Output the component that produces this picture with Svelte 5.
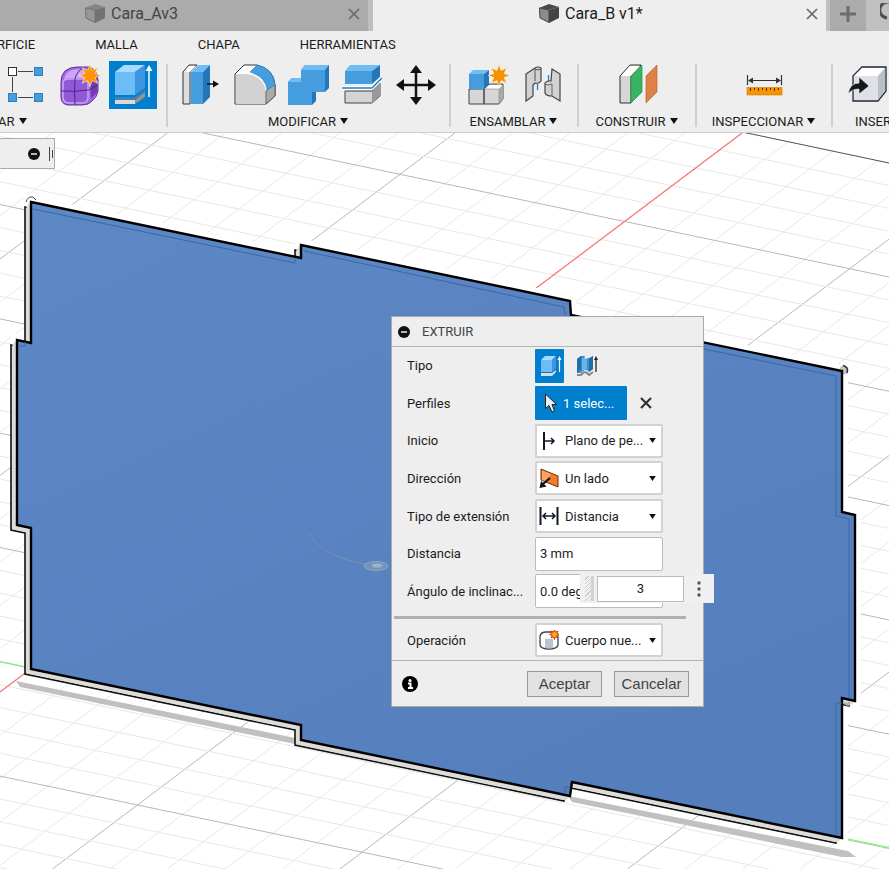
<script lang="ts">
  // document tabs
  let tabs = [
    { id: 0, name: 'Cara_Av3', active: false },
    { id: 1, name: 'Cara_B v1*', active: true }
  ];

  let menus = ['RFICIE', 'MALLA', 'CHAPA', 'HERRAMIENTAS'];

  let groups = [
    { label: 'AR', icons: ['sketch', 'form', 'extrude'], arrow: true },
    { label: 'MODIFICAR', icons: ['press', 'fillet', 'combine', 'split', 'move'], arrow: true },
    { label: 'ENSAMBLAR', icons: ['component', 'joint'], arrow: true },
    { label: 'CONSTRUIR', icons: ['plane'], arrow: true },
    { label: 'INSPECCIONAR', icons: ['measure'], arrow: true },
    { label: 'INSER', icons: ['insert'], arrow: false }
  ];

  let type = 'solid';
  let distance = '3 mm';
  let angle = '0.0 deg';
  let floating = '3';

  // grid lines: one family falls to the right, the other rises
  const SLOPE_A = 0.21;
  const SLOPE_B = 0.753;
  let gridA: { y: number; major: boolean }[] = [];
  for (let i = -4; i <= 43; i++) {
    gridA.push({ y: -24 + i * 22.86, major: i % 5 === 0 });
  }
  let gridB: { x: number; major: boolean }[] = [];
  for (let i = -5; i <= 32; i++) {
    gridB.push({ x: 344 + i * 57.5, major: i % 5 === 0 });
  }

  const plate =
    '31,202 301,258 301,245 570,301 571,315 842,371 842,512 855,515 855,701 842,698 842,838 572,782 570,796 301,740 301,725 31,669 31,528 17,525 17,340 31,343';

  function star(cx: number, cy: number, outer: number, inner: number, n: number) {
    let pts: string[] = [];
    for (let i = 0; i < n * 2; i++) {
      const r = i % 2 === 0 ? outer : inner;
      const a = (Math.PI * i) / n - Math.PI / 2;
      pts.push(`${(cx + r * Math.cos(a)).toFixed(1)},${(cy + r * Math.sin(a)).toFixed(1)}`);
    }
    return pts.join(' ');
  }
</script>

{#snippet caret()}
  <svg class="caret" viewBox="0 0 8 6" aria-hidden="true"><path d="M0 0H8L4 6Z" /></svg>
{/snippet}

{#snippet minus()}
  <svg class="minus" viewBox="0 0 12 12" aria-hidden="true">
    <circle cx="6" cy="6" r="6" fill="#111" />
    <path d="M3 6H9" stroke="#fff" stroke-width="1.4" />
  </svg>
{/snippet}

{#snippet tool(name)}
  <svg viewBox="0 0 48 48" aria-hidden="true">
    {#if name === 'sketch'}
      <path d="M17 10.5H32M11.5 16V31M17 36.5H32" stroke="#444" fill="none" />
      <rect x="7.5" y="6.5" width="8" height="8" fill="#fff" stroke="#333" />
      <g fill="#459ddd" stroke="#2f7fbd">
        <rect x="33.5" y="6.5" width="8" height="8" />
        <rect x="7.5" y="32.5" width="8" height="8" />
        <rect x="33.5" y="32.5" width="8" height="8" />
      </g>
    {:else if name === 'form'}
      <path d="M6 21Q6 14 10 10Q15 6 22 6H34Q42 8 43 19V30Q42 36 37 40Q34 44 27 44H13Q6 43 6 36Z" fill="#a46be0" stroke="#5b2e9c" />
      <path d="M9 20Q9 12 17 9Q26 7 35 11Q39 16 33 17H14Q10 17 9 20Z" fill="#caa5f5" />
      <path d="M8 21Q9 18 14 18H28Q33 18 33 23V36Q33 42 27 42H14Q8 42 8 36Z" fill="#9059d6" stroke="#c9a4f5" stroke-width="1.5" />
      <path d="M35 21L42 17V31L36 38Z" fill="#7339b5" />
      <path d="M6 30Q20 31 34 29L43 24M20 44Q19 28 20 18Q22 10 28 7" fill="none" stroke="#4e258a" />
      <polygon points={star(35, 14.5, 11, 5.5, 8)} fill="#ff9400" stroke="#fff3df" stroke-width="0.6" />
    {:else if name === 'extrude'}
      <path d="M6 11L15 4H36L26 11Z" fill="#a8dbff" />
      <path d="M6 11H26V34H6Z" fill="#6cbcf8" />
      <path d="M26 11L36 4V27L26 34Z" fill="#3b96df" />
      <path d="M6 36H26L36 29V31L26 39H6Z" fill="#3b82b8" />
      <path d="M6 39H26V43H6Z" fill="#ddd8d2" />
      <path d="M26 39L36 31V36L26 43Z" fill="#99948d" />
      <path d="M40 9V36" stroke="#fff" stroke-width="1.5" />
      <path d="M36.5 10L40 4L43.5 10Z" fill="#fff" />
    {:else if name === 'press'}
      <path d="M7 11L13 4H21L14 11V43H7Z" fill="#ddd" stroke="#333" />
      <path d="M8 11L13 5H20L14 11Z" fill="#fff" />
      <path d="M15 11L22 4H34L27 11Z" fill="#70bcf4" />
      <path d="M15 11H27V43H15Z" fill="#459ddd" />
      <path d="M27 11L34 4V36L27 43Z" fill="#2377b8" />
      <path d="M31 23H38" stroke="#111" stroke-width="1.5" />
      <path d="M37 19.5L43 23L37 26.5Z" fill="#111" />
    {:else if name === 'fillet'}
      <path d="M5 13L14 4H27Q44 8 45 24V35L36 43H5Z" fill="#fff" stroke="#333" />
      <path d="M6 13H17Q34 15 36 31V43H6Z" fill="#d2d2d2" />
      <path d="M36 30L45 23V35L36 43Z" fill="#aaa" stroke="#444" stroke-width="0.7" />
      <path d="M20 11L27 4Q43 7 45 24L37 29Q36 16 20 11Z" fill="#459ddd" stroke="#2d7dba" stroke-width="0.6" />
    {:else if name === 'combine'}
      <path d="M4 21L8 17H17V9L21 4H45V27L41 31H32V40L28 44H4Z" fill="#2377b8" />
      <path d="M4 21H17V9H41V31H28V44H4Z" fill="#459ddd" />
      <path d="M17 9L21 4H45L41 9ZM4 21L8 17H17V21Z" fill="#70bcf4" />
    {:else if name === 'split'}
      <path d="M7 10L12 4H42L34 10Z" fill="#70bcf4" />
      <path d="M7 10H34V23H7Z" fill="#459ddd" />
      <path d="M34 10L42 4V16L34 23Z" fill="#2377b8" />
      <path d="M7 30H34L42 22V35L34 42H7Z" fill="#d4d4d4" stroke="#444" />
      <path d="M34 30L42 22V35L34 42Z" fill="#999" />
      <path d="M4 27H34L44 17" fill="none" stroke="#fff" stroke-width="4" />
      <path d="M4 27H34L44 17" fill="none" stroke="#247fc5" stroke-width="1.5" />
    {:else if name === 'move'}
      <path d="M24 8V40M8 24H40" stroke="#111" stroke-width="2.5" />
      <path d="M24 4L30 12H18ZM24 44L30 36H18ZM4 24L12 18V30ZM44 24L36 18V30Z" fill="#111" />
    {:else if name === 'component'}
      <path d="M6 28H21V43H6ZM21 28L26 23H40V38L36 43H21Z" fill="#d6d6d6" stroke="#444" />
      <path d="M22 28L26 24H39L36 28Z" fill="#fff" />
      <path d="M36 28L40 24V38L36 43Z" fill="#aaa" />
      <path d="M21.5 28H36V43" fill="none" stroke="#888" stroke-width="0.6" />
      <path d="M6 13L10 9H26L21 13Z" fill="#70bcf4" />
      <path d="M6 13H21V28H6Z" fill="#459ddd" />
      <path d="M21 13L26 9V24L21 28Z" fill="#2377b8" />
      <polygon points={star(36, 14.5, 11, 5.5, 8)} fill="#f59200" stroke="#fff3df" stroke-width="0.6" />
    {:else if name === 'joint'}
      <path d="M9 13L18 7Q21 5 24 7V20Q22 23 18 22L16 24V35L9 40Z" fill="#d2d2d2" stroke="#444" stroke-width="1.2" />
      <path d="M18 8V20M18 8Q21 10 24 8" fill="none" stroke="#555" />
      <path d="M35 8L43 13V40L35 35Q29 35 28 32V22Q30 19 34 20Z" fill="#d2d2d2" stroke="#444" stroke-width="1.2" />
      <path d="M28 23Q31 25 35 23V35" fill="none" stroke="#666" />
      <path d="M20.5 22V29M31.5 14V21" stroke="#1684d8" stroke-width="1.3" />
    {:else if name === 'plane'}
      <path d="M7 15L17 4H28L18 15V42H7Z" fill="#d6d6d6" stroke="#333" />
      <path d="M8 15L17 5H27L18 15Z" fill="#fff" />
      <path d="M18 15L29 4V31L18 42Z" fill="#38b35f" stroke="#249248" stroke-width="0.7" />
      <path d="M33 15L44 4V31L33 42Z" fill="#df8147" stroke="#bb642e" stroke-width="0.7" />
    {:else if name === 'measure'}
      <path d="M7.5 14V24M41.5 14V24M10 19.5H39" stroke="#333" stroke-width="1.2" />
      <path d="M8 19.5L13 16.5V22.5ZM41 19.5L36 16.5V22.5Z" fill="#333" />
      <rect x="7" y="26.5" width="35" height="7.5" fill="#f79400" stroke="#d87900" stroke-width="0.6" />
      <path d="M10.5 27V30M14.5 27V29M18.5 27V30M22.5 27V29M26.5 27V30M30.5 27V29M34.5 27V30M38.5 27V29" stroke="#333" />
    {:else if name === 'insert'}
      <path d="M10 15L19 6H43V30L35 40H10Z" fill="#dfe1e6" stroke="#222b33" stroke-width="1.3" />
      <path d="M11 15L19 7H42L35 15Z" fill="#fff" />
      <path d="M35 15L42 7V30L35 39Z" fill="#b9bec8" />
      <path d="M5 33Q7 22 16 22V16L26 25L16 33V28Q9 28 5 33Z" fill="#16191c" stroke="#eee" stroke-width="0.6" />
    {/if}
  </svg>
{/snippet}

<div class="app">
  <header>
    <div class="tabs">
      {#each tabs as tab (tab.id)}
        <div class="tab" class:active={tab.active}>
          <button class="tab-name">
            <svg viewBox="0 0 20 20" aria-hidden="true">
              <path d="M0 4L10 0L20 3L10 6Z" fill={tab.active ? '#4a4a4a' : '#858585'} />
              <path d="M10 6L20 3V14L10 19Z" fill={tab.active ? '#444' : '#727272'} />
              <path d="M0.5 4L10 6V18.5L1 14Z" fill={tab.active ? '#8c8c8c' : '#979797'} stroke={tab.active ? '#444' : '#727272'} />
            </svg>
            {tab.name}
          </button>
          <button class="close" aria-label="Cerrar">
            <svg viewBox="0 0 12 12" aria-hidden="true"><path d="M1 1L11 11M11 1L1 11" stroke="#6a6a6a" stroke-width="1.7" /></svg>
          </button>
        </div>
      {/each}
      <button class="new-tab" aria-label="Nuevo">
        <svg viewBox="0 0 18 18" aria-hidden="true"><path d="M9 1V17M1 9H17" stroke="#6c6c6c" stroke-width="3" /></svg>
      </button>
      <button class="more" aria-label="Actualizar">
        <svg viewBox="0 0 18 18" aria-hidden="true"><path d="M14 2A8 8 0 1 0 7 15" fill="none" stroke="#505050" stroke-width="3" /></svg>
      </button>
    </div>

    <nav>
      {#each menus as menu}
        <button>{menu}</button>
      {/each}
    </nav>

    <div class="toolbar">
      {#each groups as group}
        <div class="group">
          <div class="icons">
            {#each group.icons as icon}
              <button class="tool" class:selected={icon === 'extrude'} aria-label={icon}>{@render tool(icon)}</button>
            {/each}
          </div>
          <button class="group-label">
            {group.label}
            {#if group.arrow}{@render caret()}{/if}
          </button>
        </div>
      {/each}
    </div>
  </header>

  <main>
    <svg class="canvas" viewBox="0 133 889 736" preserveAspectRatio="xMinYMin slice" aria-hidden="true">
      <defs>
        <clipPath id="ground"><path d="M0 -24L889 163V869H0Z" /></clipPath>
        <linearGradient id="face" x1="0" y1="0" x2="0.6" y2="1">
          <stop offset="0" stop-color="#5d88c6" />
          <stop offset="1" stop-color="#557ebd" />
        </linearGradient>
      </defs>
      <rect y="133" width="889" height="736" fill="#fff" />
      <g clip-path="url(#ground)">
        {#each gridB as line}
          <line class="grid" class:major={line.major} x1={line.x} y1="0" x2={line.x - 869 / SLOPE_B} y2="869" />
        {/each}
        {#each gridA as line}
          <line class="grid" class:major={line.major} x1="0" y1={line.y} x2="889" y2={line.y + 889 * SLOPE_A} />
        {/each}
      </g>
      <path d="M740 131.5L889 163" stroke="#555" fill="none" />
      <path d="M0 692L742 133" stroke="#f77" fill="none" stroke-width="1.2" />
      <path d="M0 661.5L889 847.5" stroke="#6f6" fill="none" stroke-width="1.2" />

      <!-- plate with its side faces and the shadow on the ground -->
      <polygon points={plate} fill="#fff" stroke="#fff" stroke-width="12" />
      <path d="M16 681L295 738V744L20 687ZM568 796L848 851L856 857L842 857L572 802Z" fill="#c0c0c0" />
      <polygon points={plate} fill="#dcdcd9" stroke="#111" stroke-width="1.6" transform="translate(-6 5)" />
      {#each [4, 3, 2, 1] as step}
        <polygon points={plate} fill="#dcdcd9" stroke="#dcdcd9" transform="translate({-step} {step})" />
      {/each}
      <path d="M26 202Q28 196 33 197L36 200" fill="none" stroke="#444" />
      <circle cx="844" cy="370" r="4.5" fill="#c4c4c4" />
      <path d="M843 365.5Q849 367 847 373" fill="none" stroke="#333" stroke-width="1.5" />
      <path d="M844 703L848 705L849 702" fill="none" stroke="#aaa" stroke-width="2" />
      <polygon points={plate} fill="url(#face)" stroke="#000" stroke-width="2.4" />
      <g fill="none" stroke="#3c66a4" stroke-width="1">
        <path d="M33 209L295 263V259M304 251L564 307L565 315M704 349L836 376V516L849 519V698" />
        <path d="M842 703H836V834M570 787H565V794M19 346H25V342" />
      </g>
      <path d="M309 533Q323 557 365 564" fill="none" stroke="#7891ac" />
      <ellipse cx="376" cy="566" rx="12" ry="4.5" fill="#7394bd" stroke="#8ca5c0" />
      <ellipse cx="377" cy="565.5" rx="5" ry="2" fill="#9fb3ca" />
    </svg>

    <div class="browser">
      <button aria-label="Contraer">{@render minus()}</button>
      <svg class="handle" viewBox="0 0 4 14" aria-hidden="true"><path d="M0.5 0V14M3.5 3V11" stroke="#444" /></svg>
    </div>

    <form class="dialog">
      <div class="title">
        {@render minus()}
        <h2>EXTRUIR</h2>
      </div>

      <div class="rows">
        <div class="row">
          <span class="label">Tipo</span>
          <button type="button" class="type" class:on={type === 'solid'} aria-label="Extruir" on:click={() => (type = 'solid')}>
            <svg viewBox="0 0 24 24" aria-hidden="true">
              <path d="M3 6L7 2H18L14 6Z" fill="#a8dbff" />
              <path d="M3 6H14V18H3Z" fill="#6cbcf8" />
              <path d="M14 6L18 2V14L14 18Z" fill="#3b96df" />
              <path d="M3 19H14L18 16V18L14 22H3Z" fill="#ddd" />
              <path d="M21.5 5V18" stroke="#fff" stroke-width="1.2" />
              <path d="M19.5 6L21.5 2L23.5 6Z" fill="#fff" />
            </svg>
          </button>
          <button type="button" class="type" class:on={type === 'thin'} aria-label="Extrusión fina" on:click={() => (type = 'thin')}>
            <svg viewBox="0 0 24 24" aria-hidden="true">
              <path d="M2 5L6 2H10L9 5L14 4L18 2V15L14 18Q11 14 8 17L6 19H2Z" fill="#3a8fd3" />
              <path d="M2 5L6 2V15L2 19ZM14 5L18 2V15L14 18Z" fill="#246ca6" />
              <path d="M7 4L12 5V15L7 16Z" fill="#67b4ed" />
              <path d="M2 21H6L9 18Q12 18 14 21L18 18" fill="none" stroke="#888" stroke-width="2" />
              <path d="M21 5V18" stroke="#222" stroke-width="1.3" />
              <path d="M19 6L21 2L23 6Z" fill="#222" />
            </svg>
          </button>
        </div>

        <div class="row">
          <span class="label">Perfiles</span>
          <button type="button" class="selection">
            <svg viewBox="0 0 14 20" aria-hidden="true"><path d="M1.5 1V15.5L5 12.5L8 19L10.5 18L8 11.5H12.5Z" fill="#eee" stroke="#222" /></svg>
            1 selec...
          </button>
          <button type="button" class="clear" aria-label="Borrar">
            <svg viewBox="0 0 12 12" aria-hidden="true"><path d="M1 1L11 11M11 1L1 11" stroke="#333" stroke-width="2.2" /></svg>
          </button>
        </div>

        <div class="row">
          <label class="label" for="start">Inicio</label>
          <div class="select">
            <svg viewBox="0 0 20 20" aria-hidden="true">
              <path d="M5 1V19" stroke="#111827" stroke-width="2" />
              <path d="M6 10H14M12 7L15 10L12 13" fill="none" stroke="#111827" stroke-width="1.5" />
            </svg>
            <select id="start"><option>Plano de pe...</option></select>
            {@render caret()}
          </div>
        </div>

        <div class="row">
          <label class="label" for="direction">Dirección</label>
          <div class="select">
            <svg viewBox="0 0 20 20" aria-hidden="true">
              <path d="M2 1L19 8V19L2 12Z" fill="#f27a2b" stroke="#6f2f0c" />
              <path d="M3 2.5L12 6L6 13L3 12Z" fill="#f9a56a" />
              <path d="M11 10L4 16" stroke="#111" stroke-width="2" />
              <path d="M0.5 20L2 13L7.5 18.5Z" fill="#111" />
            </svg>
            <select id="direction"><option>Un lado</option></select>
            {@render caret()}
          </div>
        </div>

        <div class="row">
          <label class="label" for="extent">Tipo de extensión</label>
          <div class="select">
            <svg viewBox="0 0 20 20" aria-hidden="true">
              <path d="M1.5 1V19M18.5 1V19" stroke="#111827" stroke-width="2" />
              <path d="M4 10H16M7 7L4 10L7 13M13 7L16 10L13 13" fill="none" stroke="#111827" stroke-width="1.5" />
            </svg>
            <select id="extent"><option>Distancia</option></select>
            {@render caret()}
          </div>
        </div>

        <div class="row">
          <label class="label" for="distance">Distancia</label>
          <input id="distance" bind:value={distance} />
        </div>

        <div class="row">
          <label class="label" for="angle">Ángulo de inclinac...</label>
          <input id="angle" bind:value={angle} />
        </div>
      </div>

      <div class="operation">
        <div class="row">
          <label class="label" for="operation">Operación</label>
          <div class="select">
            <svg viewBox="0 0 20 20" aria-hidden="true">
              <path d="M1 6Q2 2 7 2H13Q19 3 19 7V15Q18 19 10 19Q2 19 1 15Z" fill="#fff" stroke="#3b4250" stroke-width="1.3" />
              <path d="M6 9H14V18Q10 19 6 18Z" fill="#bcc3cf" />
              <polygon points={star(15.5, 4.5, 5, 2.5, 8)} fill="#ffae28" stroke="#cf3f0b" />
            </svg>
            <select id="operation"><option>Cuerpo nue...</option></select>
            {@render caret()}
          </div>
        </div>
      </div>

      <div class="footer">
        <svg class="info" viewBox="0 0 16 16" aria-hidden="true">
          <circle cx="8" cy="8" r="8" fill="#000" />
          <circle cx="8" cy="4.5" r="1.5" fill="#fff" />
          <path d="M6 7.5H8.5V12M6 12H11" fill="none" stroke="#fff" stroke-width="2" />
        </svg>
        <button type="button">Aceptar</button>
        <button type="button">Cancelar</button>
      </div>
    </form>

    <!-- floating value input over the dialog -->
    <div class="floating">
      <span class="grip"></span>
      <input aria-label="Distancia" bind:value={floating} />
      <button aria-label="Opciones">
        <svg viewBox="0 0 4 18" aria-hidden="true"><circle cx="2" cy="3" r="1.7" /><circle cx="2" cy="9" r="1.7" /><circle cx="2" cy="15" r="1.7" /></svg>
      </button>
    </div>
  </main>
</div>

<style>
  :global(body) {
    margin: 0;
  }

  .app {
    display: flex;
    flex-direction: column;
    min-height: 100vh;
    overflow: hidden;
    font-family: Roboto, 'Liberation Sans', sans-serif;
    font-size: 13px;
    color: #1c1c1c;
  }

  button,
  input,
  select {
    font: inherit;
    color: inherit;
    box-sizing: border-box;
    margin: 0;
  }

  button {
    padding: 0;
    border: none;
    background: none;
    cursor: pointer;
  }

  svg {
    display: block;
    flex-shrink: 0;
  }

  header {
    height: 133px;
    box-sizing: border-box;
    background: #eee;
    border-bottom: 1px solid #ccc;
    overflow: hidden;
  }

  /* document tabs */
  .tabs {
    display: grid;
    grid-template-columns: 373fr 453fr 40px 23px;
    height: 31px;
    background: #c0c0c0;
  }

  .tab {
    display: flex;
    align-items: center;
    justify-content: space-between;
    padding: 0 8px 4px 85px;
    background: #ababab;
    border-right: 5px solid #bebebe;
    color: #444;
  }

  .tab.active {
    padding-left: 166px;
    background: #eee;
    border-right: none;
    color: #1c1c1c;
  }

  .tab-name {
    display: flex;
    align-items: center;
    gap: 6px;
    font-size: 16px;
  }

  .tab-name svg {
    width: 20px;
    height: 20px;
  }

  .close svg {
    width: 12px;
    height: 12px;
  }

  .new-tab {
    display: flex;
    align-items: center;
    justify-content: center;
    padding-bottom: 4px;
    background: #ababab;
    border-left: 4px solid #c0c0c0;
  }

  .new-tab svg,
  .more svg {
    width: 18px;
    height: 18px;
  }

  .more {
    padding: 0 0 8px 14px;
    overflow: hidden;
  }

  nav {
    display: flex;
    align-items: center;
    gap: 60px;
    height: 28px;
    padding-bottom: 2px;
    box-sizing: border-box;
    margin-left: -3px;
  }

  .toolbar {
    display: grid;
    grid-template-columns: 168px 283px 128px 118px 136px 1fr;
  }

  .group {
    display: flex;
    flex-direction: column;
    align-items: center;
    min-width: 0;
    height: 72px;
    padding-right: 3px;
    position: relative;
  }

  .group:not(:last-child)::after {
    content: '';
    position: absolute;
    right: 0;
    top: 5px;
    width: 2px;
    height: 63px;
    background: #cfcfcf;
  }

  .icons {
    display: flex;
    gap: 6px;
    padding: 2px 0;
  }

  .tool {
    width: 48px;
    height: 48px;
  }

  .tool.selected {
    background: #007fcf;
  }

  .tool svg {
    width: 48px;
    height: 48px;
  }

  .group-label {
    display: flex;
    align-items: center;
    gap: 4px;
    height: 16px;
    margin-top: 2px;
    white-space: nowrap;
  }

  .group:first-child,
  .group:last-child {
    align-items: flex-start;
  }

  .group:first-child .icons {
    padding-left: 1px;
  }

  .group:first-child .group-label {
    margin-left: -2px;
  }

  .group:last-child {
    padding-left: 10px;
  }

  .group:last-child .group-label {
    padding-left: 12px;
  }

  .caret {
    width: 8px;
    height: 6px;
    fill: #111;
  }

  .minus {
    width: 12px;
    height: 12px;
  }

  /* viewport */
  main {
    position: relative;
    flex: 1;
    min-height: 600px;
  }

  .canvas {
    position: absolute;
    inset: 0;
    width: 100%;
    height: 100%;
  }

  .grid {
    stroke: #e8e8e8;
    stroke-width: 1;
  }

  .grid.major {
    stroke: #b8b8b8;
  }

  .browser {
    position: absolute;
    left: 0;
    top: 5px;
    display: flex;
    align-items: center;
    justify-content: flex-end;
    gap: 9px;
    width: 55px;
    height: 31px;
    padding-right: 1px;
    box-sizing: border-box;
    background: #eee;
    border: 1px solid #aaa;
    border-left: none;
  }

  .handle {
    width: 4px;
    height: 14px;
  }

  /* extrude dialog */
  .dialog {
    position: absolute;
    left: 391px;
    top: 183px;
    width: 313px;
    box-sizing: border-box;
    background: #eee;
    border: 1px solid #aaa;
  }

  .title {
    display: flex;
    align-items: center;
    gap: 12px;
    height: 29px;
    padding: 0 6px;
    border-bottom: 1px solid #b4b4b4;
  }

  h2 {
    margin: 0;
    font-size: 13px;
    font-weight: 400;
    color: #444;
  }

  .rows {
    display: grid;
    grid-auto-rows: 1fr;
    height: 263px;
    padding-left: 15px;
  }

  .row {
    display: flex;
    align-items: center;
  }

  .label {
    width: 128px;
    white-space: nowrap;
  }

  .type {
    display: flex;
    align-items: center;
    justify-content: center;
    width: 29px;
    height: 34px;
    margin-right: 8px;
    border-radius: 1px;
  }

  .type svg {
    width: 24px;
    height: 24px;
  }

  .type.on,
  .selection {
    background: #007fcf;
    color: #fff;
  }

  .selection {
    display: flex;
    align-items: center;
    gap: 5px;
    width: 92px;
    height: 34px;
    padding-left: 9px;
    border-radius: 1px;
  }

  .selection svg {
    width: 14px;
    height: 20px;
  }

  .clear {
    margin-left: 13px;
  }

  .clear svg {
    width: 12px;
    height: 12px;
  }

  .select,
  .row input {
    width: 128px;
    height: 34px;
    box-sizing: border-box;
    background: #fff;
    border: 2px solid #d2d2d2;
    border-radius: 2px;
  }

  .row input {
    padding: 0 4px;
    border: 1px solid #bbb;
  }

  .select {
    display: flex;
    align-items: center;
    padding: 0 5px 0 2px;
  }

  .select svg:first-child {
    width: 20px;
    height: 20px;
  }

  .select .caret {
    width: 7px;
    height: 5px;
  }

  .select select {
    flex: 1;
    min-width: 0;
    height: 30px;
    padding: 0 0 0 6px;
    border: none;
    background: none;
    appearance: none;
  }

  .operation {
    margin: 6px 17px 0 2px;
    padding: 4px 0 3px 13px;
    border-top: 3px solid #b0b0b0;
  }

  .footer {
    display: flex;
    align-items: center;
    gap: 12px;
    height: 45px;
    padding: 0 14px 0 10px;
    border-top: 1px solid #b4b4b4;
  }

  .info {
    width: 16px;
    height: 16px;
    margin-right: auto;
  }

  .footer button {
    width: 75px;
    height: 26px;
    background: #e1e1e1;
    border: 1px solid #999;
    font-family: 'Liberation Sans', Arial, sans-serif;
    font-size: 15px;
    color: #444;
  }

  .floating {
    position: absolute;
    left: 580px;
    top: 441px;
    display: flex;
    align-items: center;
    width: 134px;
    height: 29px;
    padding-left: 5px;
    box-sizing: border-box;
    background: #f0f0f0;
  }

  .grip {
    width: 6px;
    height: 25px;
    margin-right: 3px;
    background: repeating-linear-gradient(135deg, #f0f0f0 0 2px, #ccc 2px 3px);
    border-right: 3px solid #d2d2d2;
  }

  .floating input {
    width: 87px;
    height: 26px;
    border: 1px solid #bbb;
    background: #fff;
    text-align: center;
  }

  .floating button {
    flex: 1;
  }

  .floating button svg {
    width: 4px;
    height: 18px;
    margin: 0 auto;
    fill: #555;
  }
</style>
